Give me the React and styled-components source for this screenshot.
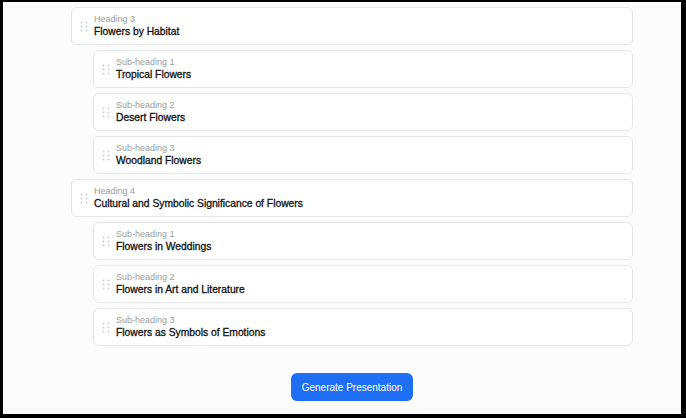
import React from "react";
import styled, { createGlobalStyle } from "styled-components";

const GlobalStyle = createGlobalStyle`
  html, body {
    margin: 0;
    padding: 0;
    background: #000;
  }
  body {
    font-family: "Liberation Sans", Arial, sans-serif;
  }
`;

const Frame = styled.div`
  margin: 2px 5px 4px 3px;
  height: 412px;
  background: #fcfcfd;
  box-sizing: border-box;
  padding: 5px 48px 0 68px;
  display: flex;
  flex-direction: column;
`;

const List = styled.div`
  display: flex;
  flex-direction: column;
  gap: 5px;
`;

const Card = styled.div`
  margin-left: ${({ sub }) => (sub ? "22px" : "0")};
  height: 38px;
  box-sizing: border-box;
  background: #fff;
  border: 1px solid #e6e7ea;
  border-radius: 6px;
  display: flex;
  align-items: center;
  padding: 0 8px;
  gap: 6px;
`;

const Handle = styled.svg`
  flex: none;
  width: 8px;
  height: 12px;
  margin-top: 2px;
`;

const Texts = styled.div`
  display: flex;
  flex-direction: column;
  padding-top: 1px;
`;

const Label = styled.div`
  font-size: 9px;
  line-height: 11px;
  color: #9a9ca3;
`;

const Title = styled.div`
  font-size: 10.3px;
  line-height: 14px;
  color: #111;
  font-weight: 400;
  -webkit-text-stroke: 0.3px #111;
`;

const Footer = styled.div`
  display: flex;
  justify-content: center;
  margin-top: 27px;
`;

const Button = styled.button`
  height: 28px;
  width: 122px;
  border: none;
  border-radius: 6px;
  background: #1f6ff4;
  color: #fff;
  font-family: "Liberation Sans", Arial, sans-serif;
  font-size: 10px;
  padding: 0;
  cursor: pointer;
`;

const DragHandle = () => (
  <Handle viewBox="0 0 8 12">
    {[1.5, 6.5].map((x) =>
      [1.5, 5.5, 9.5].map((y) => (
        <circle key={`${x}-${y}`} cx={x} cy={y} r="0.9" fill="#c9cbd0" />
      ))
    )}
  </Handle>
);

const items = [
  { sub: false, label: "Heading 3", title: "Flowers by Habitat" },
  { sub: true, label: "Sub-heading 1", title: "Tropical Flowers" },
  { sub: true, label: "Sub-heading 2", title: "Desert Flowers" },
  { sub: true, label: "Sub-heading 3", title: "Woodland Flowers" },
  { sub: false, label: "Heading 4", title: "Cultural and Symbolic Significance of Flowers" },
  { sub: true, label: "Sub-heading 1", title: "Flowers in Weddings" },
  { sub: true, label: "Sub-heading 2", title: "Flowers in Art and Literature" },
  { sub: true, label: "Sub-heading 3", title: "Flowers as Symbols of Emotions" },
];

const App = () => {
  return (
    <>
      <GlobalStyle />
      <Frame>
        <List>
          {items.map((item, index) => (
            <Card key={index} sub={item.sub ? 1 : 0}>
              <DragHandle />
              <Texts>
                <Label>{item.label}</Label>
                <Title>{item.title}</Title>
              </Texts>
            </Card>
          ))}
        </List>
        <Footer>
          <Button>Generate Presentation</Button>
        </Footer>
      </Frame>
    </>
  );
};

export default App;
